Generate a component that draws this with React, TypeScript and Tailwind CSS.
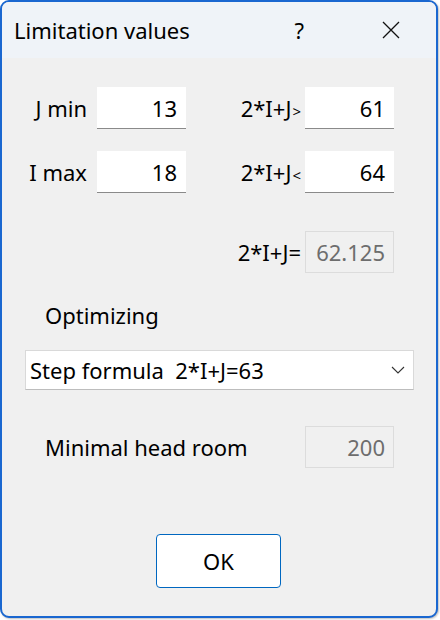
import React from "react";

const font = { fontFamily: '"Noto Sans", "Open Sans", sans-serif' };

function Field({ value, disabled }: { value: string; disabled?: boolean }) {
  if (disabled) {
    return (
      <div className="w-[89px] h-[42px] border border-[#dcdcdc] bg-[#f0f0f0] flex items-center justify-end pr-[8px] text-[#6d6d6d]">
        {value}
      </div>
    );
  }
  return (
    <div className="w-[89px] h-[42px] bg-white border-b border-[#8a8a8a] flex items-center justify-end pr-[9px] text-black">
      {value}
    </div>
  );
}

export default function App() {
  return (
    <div className="w-[440px] h-[620px] bg-white" style={font}>
      <div className="w-[438px] h-[618px] border-2 border-[#1a67d0] rounded-[9px] overflow-hidden bg-[#f0f0f0] flex flex-col text-[22px] leading-none text-black shadow-[1px_1px_2px_rgba(0,0,0,0.25)]">
        {/* title bar */}
        <div className="h-[56px] bg-[#eff3f8] flex items-center shrink-0">
          <div className="ml-[12px] text-[22px]">Limitation values</div>
          <div className="ml-auto mr-[77px] text-[22px]">?</div>
          <svg width="20" height="20" viewBox="0 0 20 20" className="mr-[35px]" fill="none" stroke="#111" strokeWidth="1.3">
            <path d="M2 2 L18 18 M18 2 L2 18" />
          </svg>
        </div>

        {/* rows */}
        <div className="flex items-center mt-[29px] h-[42px]">
          <div className="w-[85px] text-right">J min</div>
          <div className="ml-[10px]"><Field value="13" /></div>
          <div className="w-[115px] text-right">
            2*I+J<span className="text-[15px] ml-[1px]">&gt;</span>
          </div>
          <div className="ml-[4px]"><Field value="61" /></div>
        </div>
        <div className="flex items-center mt-[22px] h-[42px]">
          <div className="w-[85px] text-right">I max</div>
          <div className="ml-[10px]"><Field value="18" /></div>
          <div className="w-[115px] text-right">
            2*I+J<span className="text-[15px] ml-[1px]">&lt;</span>
          </div>
          <div className="ml-[4px]"><Field value="64" /></div>
        </div>
        <div className="flex items-center mt-[38px] h-[42px]">
          <div className="w-[299px] text-right">2*I+J=</div>
          <div className="ml-[4px]"><Field value="62.125" disabled /></div>
        </div>

        <div className="mt-[31px] ml-[43px]">Optimizing</div>

        <div className="mt-[24px] ml-[23px] w-[389px] h-[40px] bg-white border border-[#d9d9d9] border-b-[#bdbdbd] flex items-center pl-[4px] pr-[8px]">
          <span className="whitespace-pre">Step formula  2*I+J=63</span>
          <svg width="14" height="8" viewBox="0 0 14 8" className="ml-auto" fill="none" stroke="#333" strokeWidth="1.1">
            <path d="M1 1 L7 7 L13 1" />
          </svg>
        </div>

        <div className="flex items-center mt-[36px] h-[42px]">
          <div className="ml-[43px]">Minimal head room</div>
          <div className="ml-auto mr-[42px]"><Field value="200" disabled /></div>
        </div>

        <div className="mt-[66px] ml-[154px] w-[125px] h-[54px] bg-white border border-[#0067c0] rounded-[4px] flex items-center justify-center">
          OK
        </div>
      </div>
    </div>
  );
}
